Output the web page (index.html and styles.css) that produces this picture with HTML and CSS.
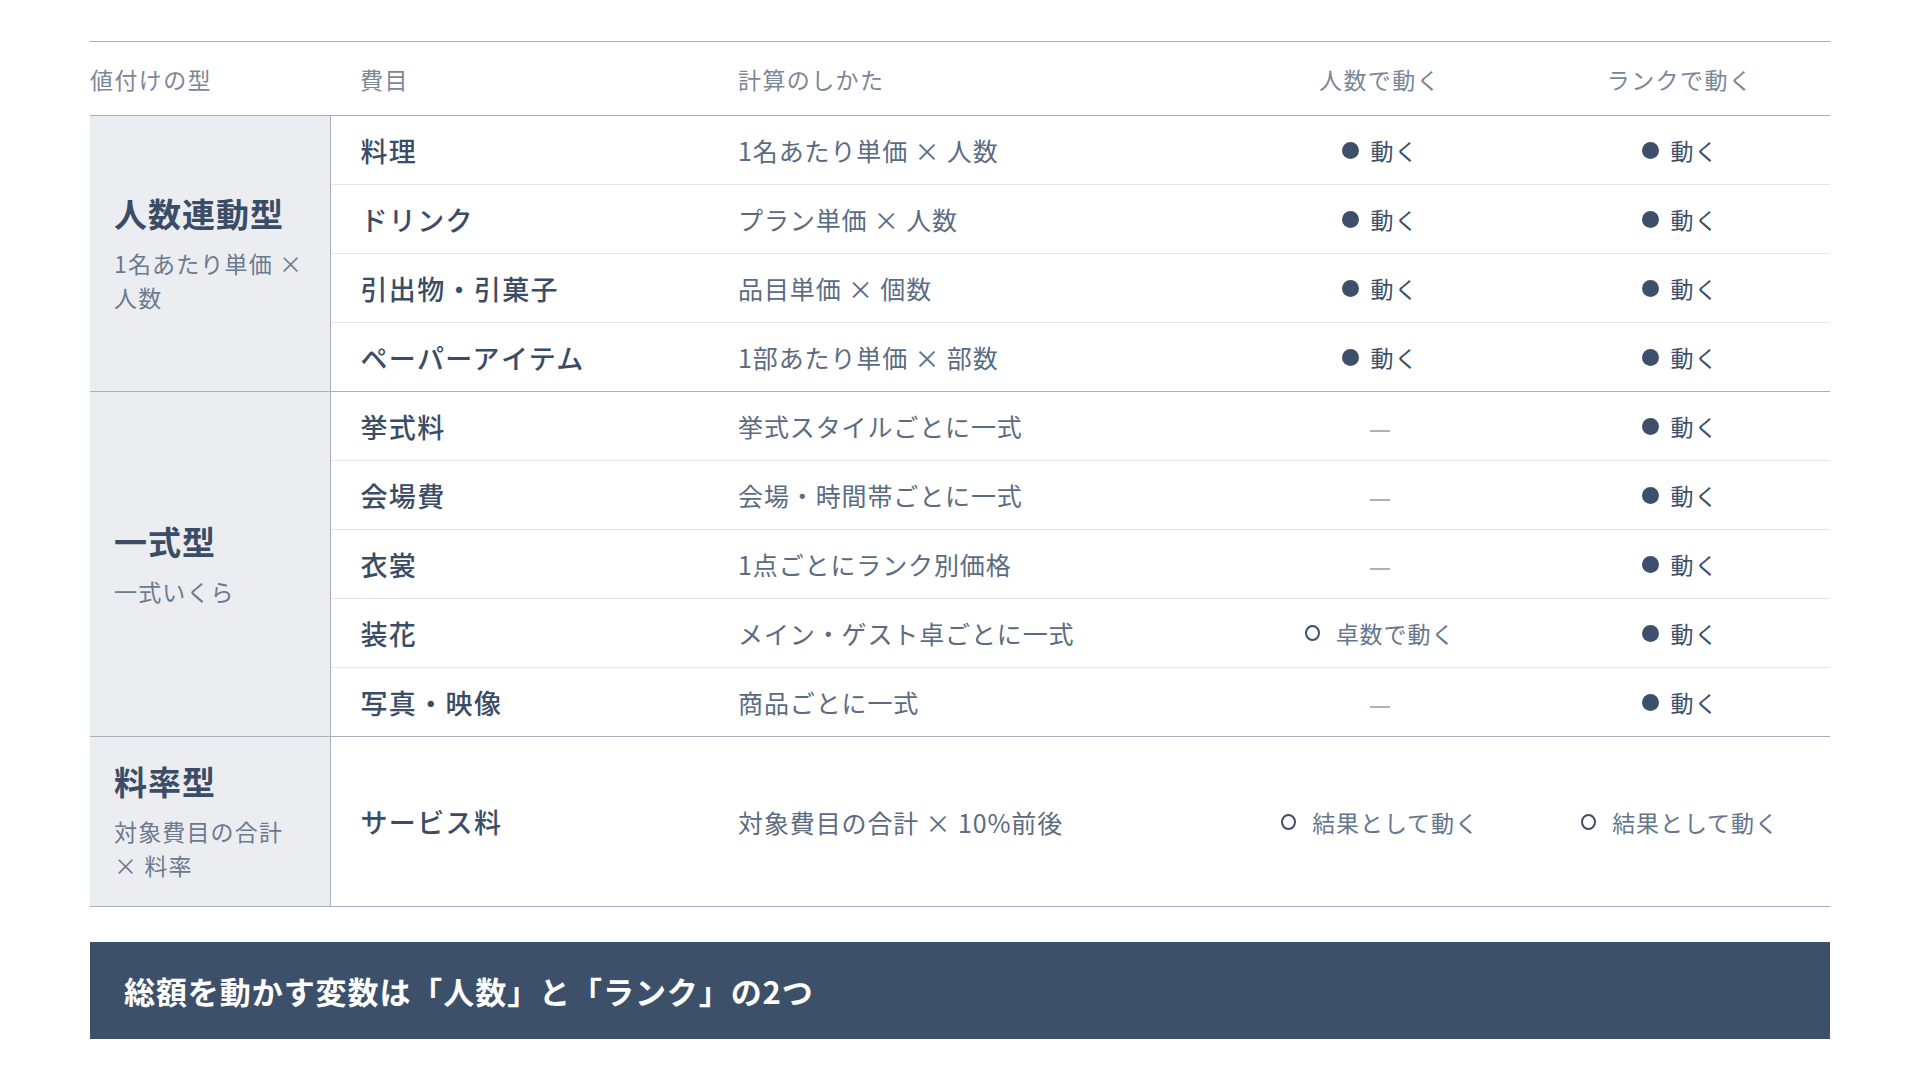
FILE: index.html
```html
<!DOCTYPE html>
<html lang="ja">
<head>
<meta charset="utf-8">
<title>値付けの型</title>
<link rel="stylesheet" href="styles.css">
</head>
<body>
<main class="page">
  <table class="price-table">
    <colgroup>
      <col class="c-type"><col class="c-item"><col class="c-calc"><col class="c-num"><col class="c-rank">
    </colgroup>
    <thead>
      <tr>
        <th class="h-type">値付けの型</th>
        <th>費目</th>
        <th>計算のしかた</th>
        <th class="center">人数で動く</th>
        <th class="center">ランクで動く</th>
      </tr>
    </thead>
    <tbody class="group">
      <tr>
        <td class="type" rowspan="4"><div class="type-title">人数連動型</div><div class="type-sub">1名あたり単価 × 人数</div></td>
        <td class="item">料理</td>
        <td class="calc">1名あたり単価 × 人数</td>
        <td class="center"><span class="mark"><span class="dot"></span>動く</span></td>
        <td class="center"><span class="mark"><span class="dot"></span>動く</span></td>
      </tr>
      <tr>
        <td class="item">ドリンク</td>
        <td class="calc">プラン単価 × 人数</td>
        <td class="center"><span class="mark"><span class="dot"></span>動く</span></td>
        <td class="center"><span class="mark"><span class="dot"></span>動く</span></td>
      </tr>
      <tr>
        <td class="item">引出物・引菓子</td>
        <td class="calc">品目単価 × 個数</td>
        <td class="center"><span class="mark"><span class="dot"></span>動く</span></td>
        <td class="center"><span class="mark"><span class="dot"></span>動く</span></td>
      </tr>
      <tr>
        <td class="item">ペーパーアイテム</td>
        <td class="calc">1部あたり単価 × 部数</td>
        <td class="center"><span class="mark"><span class="dot"></span>動く</span></td>
        <td class="center"><span class="mark"><span class="dot"></span>動く</span></td>
      </tr>
    </tbody>
    <tbody class="group">
      <tr>
        <td class="type" rowspan="5"><div class="type-title">一式型</div><div class="type-sub">一式いくら</div></td>
        <td class="item">挙式料</td>
        <td class="calc">挙式スタイルごとに一式</td>
        <td class="center"><span class="dash"></span></td>
        <td class="center"><span class="mark"><span class="dot"></span>動く</span></td>
      </tr>
      <tr>
        <td class="item">会場費</td>
        <td class="calc">会場・時間帯ごとに一式</td>
        <td class="center"><span class="dash"></span></td>
        <td class="center"><span class="mark"><span class="dot"></span>動く</span></td>
      </tr>
      <tr>
        <td class="item">衣裳</td>
        <td class="calc">1点ごとにランク別価格</td>
        <td class="center"><span class="dash"></span></td>
        <td class="center"><span class="mark"><span class="dot"></span>動く</span></td>
      </tr>
      <tr>
        <td class="item">装花</td>
        <td class="calc">メイン・ゲスト卓ごとに一式</td>
        <td class="center"><span class="mark soft"><span class="ring"></span>卓数で動く</span></td>
        <td class="center"><span class="mark"><span class="dot"></span>動く</span></td>
      </tr>
      <tr>
        <td class="item">写真・映像</td>
        <td class="calc">商品ごとに一式</td>
        <td class="center"><span class="dash"></span></td>
        <td class="center"><span class="mark"><span class="dot"></span>動く</span></td>
      </tr>
    </tbody>
    <tbody class="group">
      <tr>
        <td class="type"><div class="type-title">料率型</div><div class="type-sub">対象費目の合計 × 料率</div></td>
        <td class="item">サービス料</td>
        <td class="calc">対象費目の合計 × 10%前後</td>
        <td class="center"><span class="mark soft"><span class="ring"></span>結果として動く</span></td>
        <td class="center"><span class="mark soft"><span class="ring"></span>結果として動く</span></td>
      </tr>
    </tbody>
  </table>
  <div class="banner">総額を動かす変数は「人数」と「ランク」の2つ</div>
</main>
</body>
</html>
```

FILE: styles.css
```css
* { box-sizing: border-box; }
html, body { margin: 0; padding: 0; background: #ffffff; }
body {
  font-family: "Noto Sans CJK JP", "Noto Sans", sans-serif;
  color: #3b4c66;
}
.page {
  padding: 41px 90px 0 90px;
}
.price-table {
  width: 1740px;
  border-collapse: collapse;
  table-layout: fixed;
}
.c-type { width: 240px; }
.c-item { width: 378px; }
.c-calc { width: 522px; }
.c-num { width: 300px; }
.c-rank { width: 300px; }

thead tr {
  border-top: 1px solid #a6afbd;
  border-bottom: 1px solid #a6afbd;
}
th {
  height: 74px;
  padding: 0 0 0 30px;
  text-align: left;
  font-weight: 400;
  font-size: 23px;
  letter-spacing: 0.06em;
  color: #7c8797;
  vertical-align: middle;
}
th.h-type { padding-left: 0; }
th.center, td.center { text-align: center; padding-left: 0; }

tbody.group { border-bottom: 1px solid #a6afbd; }
tbody.group tr + tr { border-top: 1px solid #e3e6eb; }

td {
  height: 69px;
  padding: 0 0 0 30px;
  vertical-align: middle;
}
td.type {
  background: #ebedf1;
  border-right: 1px solid #a6afbd;
  padding: 24px 24px;
}
.type-title {
  font-size: 33px;
  font-weight: 700;
  letter-spacing: 0.03em;
  line-height: 41px;
  color: #3b4c66;
}
.type-sub {
  margin-top: 12px;
  font-size: 23px;
  letter-spacing: 0.05em;
  line-height: 34px;
  color: #6b7a8f;
}
td.item {
  font-size: 27px;
  font-weight: 500;
  letter-spacing: 0.05em;
  color: #3b4c66;
}
td.calc {
  font-size: 25px;
  letter-spacing: 0.035em;
  color: #5b6b82;
}
.mark {
  display: inline-flex;
  align-items: center;
  font-size: 23px;
  letter-spacing: 0.04em;
  color: #3d4f6a;
}
.mark.soft { color: #66768c; }
.dot {
  width: 17px;
  height: 17px;
  border-radius: 50%;
  background: #3d4f6a;
  margin-right: 12px;
}
.ring {
  width: 15px;
  height: 16px;
  border-radius: 50%;
  border: 2px solid #3d4f6a;
  margin-right: 16px;
}
.dash {
  display: inline-block;
  width: 20px;
  height: 2px;
  background: #aab2bf;
  vertical-align: middle;
  position: relative;
  top: 2px;
}
.banner {
  margin-top: 35px;
  width: 1740px;
  height: 97px;
  background: #3d5069;
  color: #ffffff;
  font-size: 31px;
  font-weight: 700;
  letter-spacing: 0.03em;
  display: flex;
  align-items: center;
  padding-left: 34px;
}
```
